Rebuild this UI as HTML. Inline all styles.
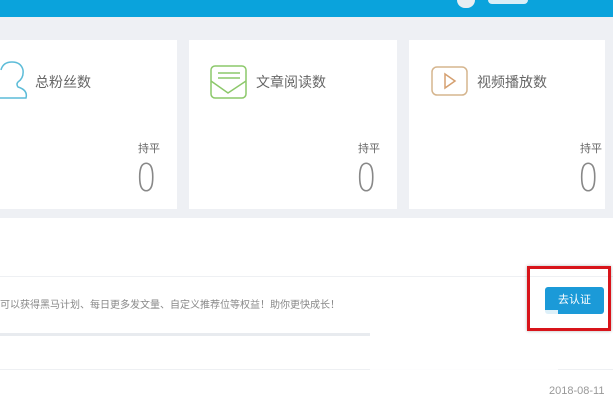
<!DOCTYPE html>
<html><head><meta charset="utf-8"><style>
*{margin:0;padding:0;box-sizing:border-box}
body{width:613px;height:401px;overflow:hidden;background:#fff;font-family:"Liberation Sans","Noto Sans CJK SC",sans-serif;position:relative}
.hdr{position:absolute;left:0;top:0;width:613px;height:17px;background:#0aa3dc}
.gray{position:absolute;left:0;top:17px;width:613px;height:201px;background:#eef0f4}
.card{position:absolute;top:40px;height:169px;background:#fff}
.t{position:absolute;top:72px;font-size:14px;color:#666}
.p{position:absolute;top:140px;font-size:11px;color:#666}
.z{position:absolute;top:156px;font-size:38px;font-weight:300;color:#888;font-family:"DejaVu Sans","Liberation Sans",sans-serif;line-height:44px;transform:scaleX(0.85);transform-origin:left}
.abs{position:absolute}
</style></head><body>
<div class="hdr"></div>
<div class="abs" style="left:457px;top:0;width:18px;height:8px;border-radius:0 0 9px 9px;background:#e8eef2"></div>
<div class="abs" style="left:488px;top:0;width:40px;height:4px;background:#d9eef7;border-radius:0 0 6px 6px"></div>
<div class="gray"></div>
<div class="card" style="left:0;width:177px"></div>
<div class="card" style="left:189px;width:208px"></div>
<div class="card" style="left:409px;width:196px"></div>
<svg class="abs" style="left:0;top:60px" width="30" height="42" viewBox="0 0 30 42"><path d="M-4 38 L26 38 Q28 30 18 27 Q16 24 18 22 Q24 18 23 10 Q21 2 12 2 Q3 2 1 10" fill="none" stroke="#5cbcd8" stroke-width="1.5"/></svg>
<div class="t" style="left:35px">总粉丝数</div>
<div class="p" style="left:138px">持平</div>
<div class="z" style="left:136px">0</div>
<svg class="abs" style="left:210px;top:65px" width="38" height="35" viewBox="0 0 38 35"><rect x="1" y="1" width="35" height="32" rx="4" fill="none" stroke="#8cc86a" stroke-width="1.5"/><path d="M1 16 L18 28 L36 16" fill="none" stroke="#8cc86a" stroke-width="1.5"/><path d="M8 8 H30 M8 13 H30" stroke="#8cc86a" stroke-width="1.5"/></svg>
<div class="t" style="left:256px">文章阅读数</div>
<div class="p" style="left:358px">持平</div>
<div class="z" style="left:356px">0</div>
<svg class="abs" style="left:431px;top:66px" width="38" height="30" viewBox="0 0 38 30"><rect x="1" y="1" width="35" height="28" rx="5" fill="none" stroke="#d5b58e" stroke-width="1.5"/><path d="M14 8 L24 15 L14 22 Z" fill="none" stroke="#d5a070" stroke-width="1.5"/></svg>
<div class="t" style="left:477px">视频播放数</div>
<div class="p" style="left:580px">持平</div>
<div class="z" style="left:578px">0</div>
<div class="abs" style="left:0;top:276px;width:613px;height:1px;background:#eef0f3"></div>
<div class="abs" style="left:0;top:296px;font-size:10px;color:#888">可以获得黑马计划、每日更多发文量、自定义推荐位等权益！助你更快成长！</div>
<div class="abs" style="left:0;top:333px;width:370px;height:3px;background:#e8ebef"></div>
<div class="abs" style="left:0;top:369px;width:613px;height:1px;background:#eef0f3"></div>
<div class="abs" style="left:545px;top:287px;width:59px;height:27px;background:#1b9ad8;border-radius:3px;color:#fff;font-size:11px;text-align:center;line-height:27px">去认证</div>
<div class="abs" style="left:370px;top:310px;width:188px;height:92px;background:rgba(255,255,255,0.85)"></div>
<div class="abs" style="left:527px;top:266px;width:84px;height:65px;border:3px solid #d8141a;box-shadow:0 0 3px rgba(0,0,0,.3)"></div>
<div class="abs" style="left:549px;top:385px;font-size:11px;color:#999">2018-08-11</div>
</body></html>
